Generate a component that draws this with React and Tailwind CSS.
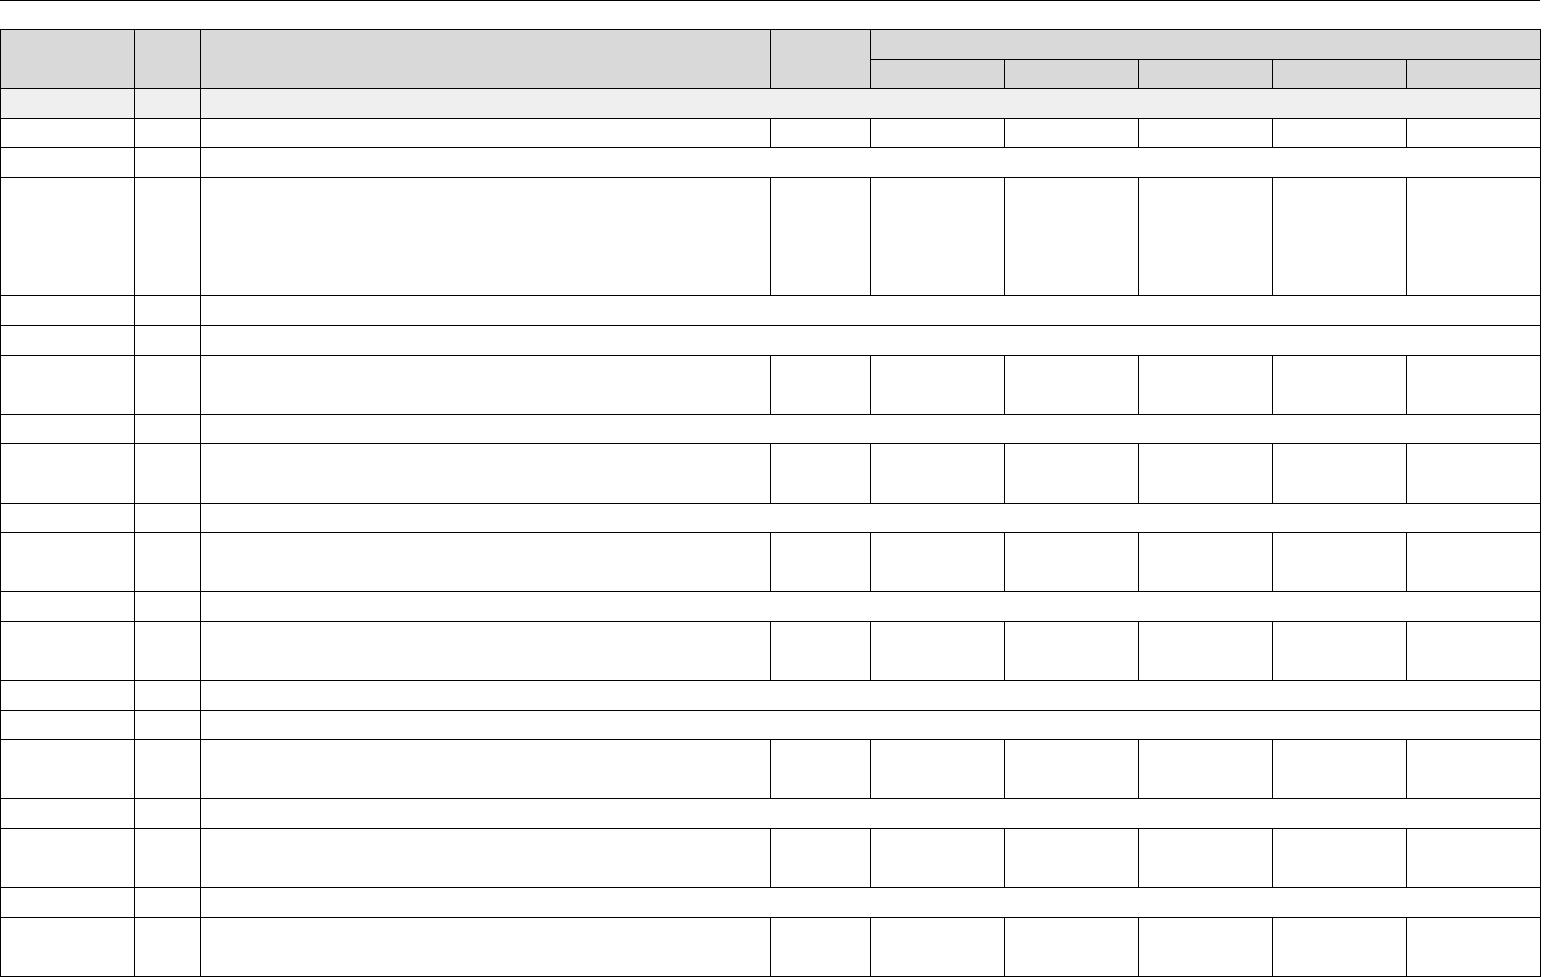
import React from 'react';

// row kinds: 's' = section row (merged after second col), 'f' = full row with all cells
const rows = [
  { kind: 's', h: 'h-[29.6px]', shaded: true },
  { kind: 'f', h: 'h-[29.6px]' },
  { kind: 's', h: 'h-[29.6px]' },
  { kind: 'f', h: 'h-[118.4px]' },
  { kind: 's', h: 'h-[29.6px]' },
  { kind: 's', h: 'h-[29.6px]' },
  { kind: 'f', h: 'h-[59.2px]' },
  { kind: 's', h: 'h-[29.6px]' },
  { kind: 'f', h: 'h-[59.2px]' },
  { kind: 's', h: 'h-[29.6px]' },
  { kind: 'f', h: 'h-[59.2px]' },
  { kind: 's', h: 'h-[29.6px]' },
  { kind: 'f', h: 'h-[59.2px]' },
  { kind: 's', h: 'h-[29.6px]' },
  { kind: 's', h: 'h-[29.6px]' },
  { kind: 'f', h: 'h-[59.2px]' },
  { kind: 's', h: 'h-[29.6px]' },
  { kind: 'f', h: 'h-[59.2px]' },
  { kind: 's', h: 'h-[29.6px]' },
  { kind: 'f', h: 'h-[59.2px]' },
];

const cell = 'border border-black p-0';

const App = () => {
  return (
    <div className="bg-white min-h-screen font-['Liberation_Sans',sans-serif]">
      <div className="w-[1540px] border-t border-black" />
      <table className="mt-[28px] w-[1540px] table-fixed border-collapse">
        <colgroup>
          <col className="w-[134px]" />
          <col className="w-[66px]" />
          <col className="w-[570px]" />
          <col className="w-[100px]" />
          <col className="w-[134px]" />
          <col className="w-[134px]" />
          <col className="w-[134px]" />
          <col className="w-[134px]" />
          <col className="w-[134px]" />
        </colgroup>
        <thead className="bg-[#d9d9d9]">
          <tr className="h-[29.6px]">
            <th rowSpan={2} className={cell}></th>
            <th rowSpan={2} className={cell}></th>
            <th rowSpan={2} className={cell}></th>
            <th rowSpan={2} className={cell}></th>
            <th colSpan={5} className={cell}></th>
          </tr>
          <tr className="h-[29.6px]">
            <th className={cell}></th>
            <th className={cell}></th>
            <th className={cell}></th>
            <th className={cell}></th>
            <th className={cell}></th>
          </tr>
        </thead>
        <tbody>
          {rows.map((r, i) => (
            <tr key={i} className={`${r.h} ${r.shaded ? 'bg-[#efefef]' : ''}`}>
              <td className={cell}></td>
              <td className={cell}></td>
              {r.kind === 's' ? (
                <td colSpan={7} className={cell}></td>
              ) : (
                <>
                  <td className={cell}></td>
                  <td className={cell}></td>
                  <td className={cell}></td>
                  <td className={cell}></td>
                  <td className={cell}></td>
                  <td className={cell}></td>
                  <td className={cell}></td>
                </>
              )}
            </tr>
          ))}
        </tbody>
      </table>
    </div>
  );
};

export default App;
